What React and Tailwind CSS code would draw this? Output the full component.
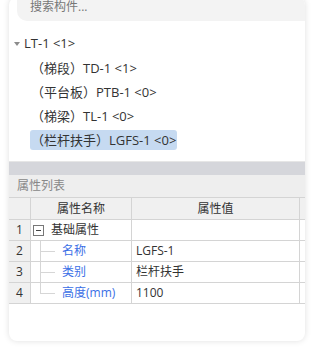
import React from 'react';

const FONT = { fontFamily: '"Open Sans", "Noto Sans CJK SC", sans-serif' };

const treeItems = [
  { label: '（梯段）TD-1 <1>' },
  { label: '（平台板）PTB-1 <0>' },
  { label: '（梯梁）TL-1 <0>' },
  { label: '（栏杆扶手）LGFS-1 <0>', active: true },
];

const props = [
  { name: '名称', value: 'LGFS-1' },
  { name: '类别', value: '栏杆扶手' },
  { name: '高度(mm)', value: '1100', last: true },
];

// tree connector for child property rows
const Branch = ({ last }) => (
  <div className="relative w-[22px] h-full shrink-0">
    <div className={`absolute left-[9px] top-0 w-px bg-[#d6d6d6] ${last ? 'h-[11px]' : 'h-full'}`} />
    <div className="absolute left-[9px] top-[10px] w-[15px] h-px bg-[#d6d6d6]" />
  </div>
);

export default function App() {
  return (
    <div className="w-[314px] h-[350px] bg-white overflow-hidden" style={FONT}>
      <div className="mx-[9px] -mt-[3px] h-[344px] rounded-lg bg-white shadow-[0_0_6px_rgba(0,0,0,0.13)] overflow-hidden flex flex-col">
        {/* search */}
        <div className="pl-2">
          <div className="h-[24px] bg-[#f3f3f3] rounded-bl-[10px] pl-[13px] pt-[4px] text-[12px] leading-[12px] text-[#777]">
            搜索构件...
          </div>
        </div>

        {/* tree */}
        <div className="pt-[11px] h-[140px] text-[13px] text-[#333]">
          <div className="h-[24px] flex items-center pl-[5px]">
            <svg width="6" height="4" viewBox="0 0 6 4" className="mr-[4px]">
              <path d="M0 0 L6 0 L3 4 Z" fill="#8c8c8c" />
            </svg>
            <span>LT-1 &lt;1&gt;</span>
          </div>
          {treeItems.map((it) => (
            <div key={it.label} className="h-[24px] flex items-center pl-[21px]">
              <span className={`h-[20px] leading-[20px] px-[1px] rounded-[3px] ${it.active ? 'bg-[#c6daf1]' : ''}`}>
                {it.label}
              </span>
            </div>
          ))}
        </div>

        {/* splitter */}
        <div className="h-[14px] border-t border-[#e6e6e6] bg-[#d5d6db]" />

        {/* property panel */}
        <div className="h-[22px] bg-[#eeeeee] pl-2 flex items-center text-[12px] text-[#888]">属性列表</div>

        <div className="grid grid-cols-[22px_101px_168px_1fr] text-[12px] text-[#333] border-t border-[#d4d4d4]">
          <div className="h-[22px] bg-[#f0f0f0] border-r border-b border-[#d4d4d4]" />
          <div className="h-[22px] bg-[#f0f0f0] border-r border-b border-[#d4d4d4] flex items-center justify-center">属性名称</div>
          <div className="h-[22px] bg-[#f0f0f0] border-r border-b border-[#d4d4d4] flex items-center justify-center">属性值</div>
          <div className="h-[22px] bg-[#f0f0f0] border-b border-[#d4d4d4]" />

          <div className="h-[21px] bg-[#f0f0f0] border-r border-b border-[#d4d4d4] flex items-center justify-center">1</div>
          <div className="h-[21px] border-r border-b border-[#d4d4d4] flex items-center pl-[2px]">
            <span className="w-[11px] h-[11px] border border-[#777] flex items-center justify-center mr-[7px]">
              <span className="w-[5px] h-px bg-[#444]" />
            </span>
            基础属性
          </div>
          <div className="h-[21px] border-r border-b border-[#d4d4d4]" />
          <div className="h-[21px] border-b border-[#d4d4d4]" />

          {props.map((p, i) => (
            <React.Fragment key={p.name}>
              <div className="h-[21px] bg-[#f0f0f0] border-r border-b border-[#d4d4d4] flex items-center justify-center">{i + 2}</div>
              <div className="h-[21px] border-r border-b border-[#d4d4d4] flex items-center">
                <Branch last={p.last} />
                <span className="ml-[9px] text-[#3b6fe6]">{p.name}</span>
              </div>
              <div className="h-[21px] border-r border-b border-[#d4d4d4] flex items-center pl-[4px]">{p.value}</div>
              <div className="h-[21px] border-b border-[#d4d4d4]" />
            </React.Fragment>
          ))}
        </div>
      </div>
    </div>
  );
}
